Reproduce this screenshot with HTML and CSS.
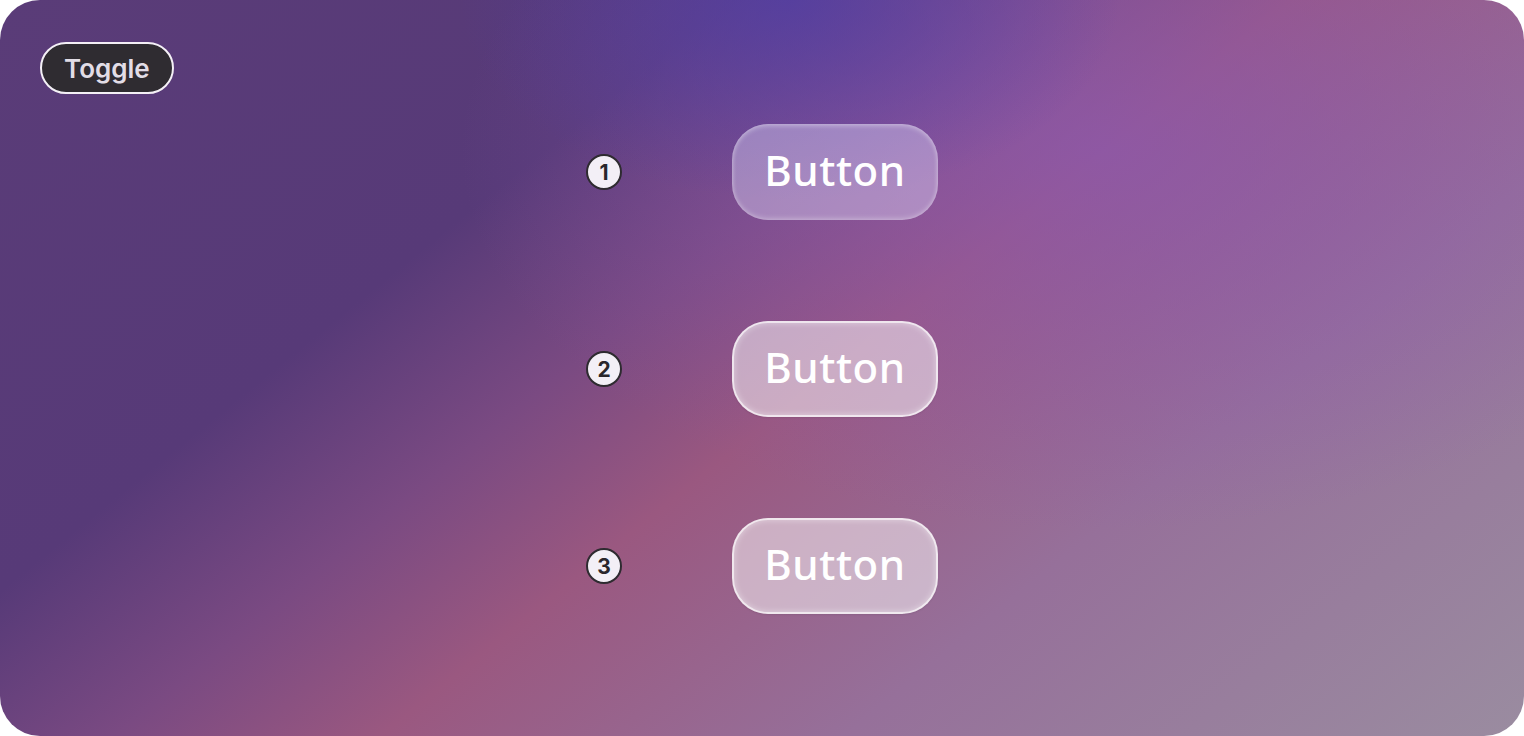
FILE: index.html
```html
<!DOCTYPE html>
<html lang="en">
<head>
<meta charset="UTF-8">
<meta name="viewport" content="width=device-width, initial-scale=1.0">
<title>Glass Buttons</title>
<link rel="stylesheet" href="styles.css">
</head>
<body>
<div class="stage">
	<button class="toggle">Toggle</button>
	<div class="list">
		<div class="row">
			<span class="badge">1</span>
			<button class="glass v1">Button</button>
		</div>
		<div class="row">
			<span class="badge">2</span>
			<button class="glass v2">Button</button>
		</div>
		<div class="row">
			<span class="badge">3</span>
			<button class="glass v3">Button</button>
		</div>
	</div>
</div>
</body>
</html>
```

FILE: styles.css
```css
:root {
	--dark: #2f2c31;
	--badge-bg: #f3eff6;
}
html, body {
	margin: 0;
	height: 100%;
	background: #fff;
}
body {
	font-family: Inter, "Noto Sans", sans-serif;
}

.stage {
	box-sizing: border-box;
	height: 100vh;
	border-radius: 40px;
	overflow: hidden;
	padding: 42px 40px 0;
	display: flex;
	flex-direction: column;
	background:
		radial-gradient(ellipse 330px 200px at 790px 0px, rgba(80, 62, 165, 0.75), rgba(80, 62, 165, 0)),
		radial-gradient(ellipse 640px 380px at 1100px 150px, rgba(138, 88, 178, 0.7), rgba(138, 88, 178, 0)),
		linear-gradient(141deg, #5a3c78 0%, #573a78 30%, #7a4a82 42%, #9a5880 53%, #96709a 72%, #9a8ca0 100%);
}

.toggle {
	align-self: flex-start;
	height: 52px;
	padding: 0 22px;
	border-radius: 26px;
	border: 2px solid #f4f0f6;
	background: var(--dark);
	color: #e2dde6;
	font: 600 26px Inter, sans-serif;
	margin-bottom: 30px;
}

.list {
	display: flex;
	flex-direction: column;
	align-items: center;
	gap: 101px;
}
.row {
	display: flex;
	align-items: center;
	gap: 110px;
}

.badge {
	box-sizing: border-box;
	width: 36px;
	height: 36px;
	border-radius: 50%;
	border: 2px solid #2e2b30;
	background: var(--badge-bg);
	color: #2a272c;
	font: 700 21px Inter, sans-serif;
	display: flex;
	align-items: center;
	justify-content: center;
}

.glass {
	box-sizing: border-box;
	width: 206px;
	height: 96px;
	border-radius: 36px;
	border: none;
	color: #fff;
	font: 500 42px/1 "Noto Sans", sans-serif;
	letter-spacing: 0.6px;
	padding: 0 0 4px;
}
.glass.v1 {
	background: rgba(228, 222, 255, 0.4);
	box-shadow: inset 0 2px 5px rgba(255, 255, 255, 0.35), inset 0 -2px 5px rgba(255, 255, 255, 0.25);
}
.glass.v2, .glass.v3 {
	background: rgba(255, 255, 255, 0.5);
	border: 2px solid rgba(255, 255, 255, 0.7);
	box-shadow: inset 0 0 6px rgba(255, 255, 255, 0.45), 0 1px 2px rgba(0, 0, 0, 0.08);
}
```
